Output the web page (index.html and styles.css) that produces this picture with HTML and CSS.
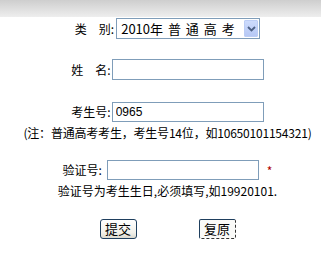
FILE: index.html
```html
<!DOCTYPE html>
<html lang="zh">
<head>
    <meta charset="UTF-8">
    <title>考生查询</title>
    <link rel="stylesheet" href="styles.css">
</head>
<body>
    <div class="topbar"></div>

    <form class="main" onsubmit="return false">
        <div class="row row-type">
            <label class="label">类　别:</label>
            <div class="select-wrap">
                <select class="select">
                    <option>2010年 普 通 高 考</option>
                </select>
                <span class="select-btn">
                    <svg width="9" height="6" viewBox="0 0 9 6"><path d="M1 1 L4.5 4.5 L8 1" fill="none" stroke="#4d6185" stroke-width="1.8"/></svg>
                </span>
            </div>
        </div>

        <div class="row row-name">
            <label class="label">姓　名:</label>
            <input class="field" type="text">
        </div>

        <div class="row row-ksh">
            <label class="label">考生号:</label>
            <input class="field" type="text" value="0965">
        </div>
        <div class="note">(注：普通高考考生，考生号14位，如10650101154321)</div>

        <div class="row row-code">
            <label class="label">验证号:</label>
            <input class="field" type="text">
            <span class="star">*</span>
        </div>
        <div class="hint">验证号为考生生日,必须填写,如19920101.</div>

        <div class="buttons">
            <button class="btn" type="submit">提交</button>
            <button class="btn btn-focus" type="reset">复原</button>
        </div>
    </form>
</body>
</html>
```

FILE: styles.css
```css
* {
    margin: 0;
    padding: 0;
    box-sizing: border-box;
}

body {
    background: white;
    font-family: "Noto Sans CJK SC", "Liberation Sans", sans-serif;
    font-size: 12px;
    color: #000;
}

.topbar {
    height: 17px;
    background: linear-gradient(#cecece, #eeeeee);
}

.main {
    padding-left: 14px;
    display: flex;
    flex-direction: column;
}

.row {
    display: flex;
    justify-content: center;
    align-items: center;
}

.label {
    line-height: 14px;
    white-space: nowrap;
}

.row-type {
    margin-top: 1px;
    gap: 2px;
}

.row-name {
    margin-top: 20px;
    gap: 1px;
}

.row-ksh {
    margin-top: 22px;
    gap: 1px;
}

.row-code {
    margin-top: 20px;
}

.row-code .label {
    margin-right: 5px;
}

.select-wrap {
    position: relative;
    width: 144px;
    height: 21px;
}

.select {
    appearance: none;
    -webkit-appearance: none;
    width: 100%;
    height: 100%;
    border: 1px solid #7f9db9;
    background: white;
    padding-left: 4px;
    font-family: "Noto Sans CJK SC", "Liberation Sans", sans-serif;
    font-size: 13px;
    word-spacing: 2px;
    color: #000;
    outline: none;
}

.select-btn {
    position: absolute;
    top: 2px;
    right: 2px;
    width: 14px;
    height: 17px;
    background: linear-gradient(#cddbfc, #b6c8f5);
    border: 1px solid #bccdf5;
    border-radius: 1px;
    display: flex;
    align-items: center;
    justify-content: center;
    pointer-events: none;
}

.field {
    width: 152px;
    height: 21px;
    border: 1px solid #7f9db9;
    padding-left: 3px;
    font-family: "Liberation Sans", sans-serif;
    font-size: 12px;
    color: #000;
    outline: none;
}

.row-ksh .field,
.row-code .field {
    height: 20px;
}

.star {
    color: #b00000;
    margin-left: 8px;
    font-size: 12px;
}

.note {
    margin-top: 4px;
    line-height: 14px;
    text-align: center;
    white-space: nowrap;
    letter-spacing: -0.2px;
}

.hint {
    margin-top: 4px;
    line-height: 14px;
    text-align: center;
    white-space: nowrap;
}

.buttons {
    margin-top: 21px;
    display: flex;
    justify-content: center;
    gap: 62px;
}

.btn {
    width: 37px;
    height: 20px;
    border: 1px solid #1f3f5e;
    border-radius: 3px;
    background: linear-gradient(#ffffff, #f2f1ea 70%, #dcdad0);
    font-family: "Noto Sans CJK SC", sans-serif;
    font-size: 13px;
    line-height: 16px;
    color: #000;
    cursor: pointer;
}

.btn-focus {
    border-right: 1px dashed #333;
    border-bottom: 1px dashed #333;
    border-radius: 2px;
    background: #fafaf8;
}
```
